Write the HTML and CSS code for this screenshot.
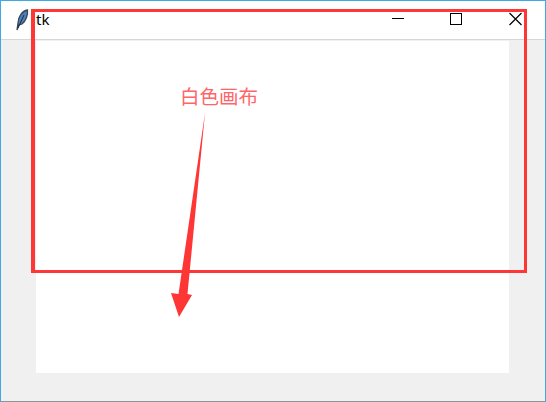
FILE: index.html
```html
<!DOCTYPE html>
<html lang="zh">
<head>
  <meta charset="UTF-8" />
  <title>tk</title>
  <link rel="stylesheet" href="styles.css">
</head>
<body>
  <div class="window">
    <div class="titlebar">
      <svg class="feather" width="14" height="22" viewBox="0 0 14 22">
        <path d="M2 21 L3 14 C3 8 7 2 12.500 1 C13 6 11 12 7 15 L4 16 Z" fill="#4a7fc0" stroke="#3a4552" stroke-width="1.300"/>
        <path d="M3 19 L9 6" stroke="#1f2a3a" stroke-width="1" fill="none"/>
      </svg>
      <span class="title">tk</span>
      <div class="controls">
        <svg width="14" height="14" viewBox="0 0 14 14"><path d="M1 6.500 H13" stroke="#000" fill="none"/></svg>
        <svg width="14" height="14" viewBox="0 0 14 14"><rect x="0.500" y="1.500" width="11" height="11" stroke="#000" fill="none"/></svg>
        <svg width="14" height="14" viewBox="0 0 14 14"><path d="M0.500 1 L12.500 13 M12.500 1 L0.500 13" stroke="#000" stroke-width="1.200" fill="none"/></svg>
      </div>
    </div>
    <div class="content">
      <div class="canvas"></div>
    </div>
  </div>

  <!-- annotation on top of the screenshot -->
  <div class="mark"></div>
  <span class="note">白色画布</span>
  <svg class="arrow" width="60" height="220" viewBox="0 0 60 220">
    <path d="M35 3 L17.500 184 L22 185 L9 207 L1 183 L8.500 184 Z" fill="#ff3636"/>
  </svg>
</body>
</html>
```

FILE: styles.css
```css
html, body {
  margin: 0;
  height: 100%;
  overflow: hidden;
  background: #fff;
}
.window {
  box-sizing: border-box;
  height: 402px;
  display: flex;
  flex-direction: column;
  border: 1px solid #3fa9e8;
  border-bottom-color: #8f9499;
  font-family: 'Liberation Sans', sans-serif;
}
.titlebar {
  height: 38px;
  flex: none;
  display: flex;
  align-items: center;
  background: #fff;
  border-bottom: 1px solid #d6d6d6;
  padding-left: 14px;
}
.feather {
  margin-top: -1px;
}
.title {
  font-family: 'Noto Sans', sans-serif;
  font-size: 15px;
  color: #000;
  margin-left: 7px;
  margin-top: -3px;
}
.controls {
  margin-left: auto;
  display: flex;
  gap: 45px;
  margin-right: 22px;
  margin-top: -3px;
}
.content {
  flex: 1;
  background: #f0f0f0;
  padding: 1px 36px 28px 35px;
  display: flex;
}
.canvas {
  flex: 1;
  background: #fff;
}
.mark {
  position: absolute;
  left: 31px;
  top: 9px;
  width: 489px;
  height: 258px;
  border: 3px solid #ff3636;
  border-left-width: 4px;
}
.note {
  position: absolute;
  left: 180px;
  top: 84px;
  font-family: 'Noto Sans CJK SC', sans-serif;
  font-size: 19.500px;
  font-weight: 400;
  line-height: 24px;
  color: #ff6468;
}
.arrow {
  position: absolute;
  left: 170px;
  top: 110px;
}
```
